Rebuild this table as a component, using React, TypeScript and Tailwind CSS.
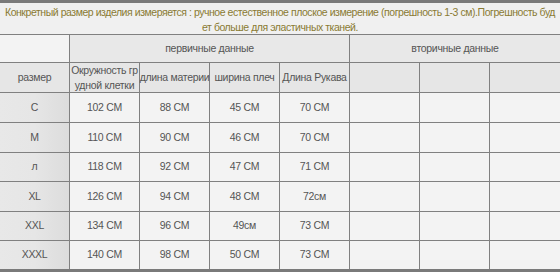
import React from "react";

const rows = [
  ["C", "102 CM", "88 CM", "45 CM", "70 CM", "h-[29px]"],
  ["M", "110 CM", "90 CM", "46 CM", "70 CM", "h-[29px]"],
  ["л", "118 CM", "92 CM", "47 CM", "71 CM", "h-[28px]"],
  ["XL", "126 CM", "94 CM", "48 CM", "72см", "h-[29px]"],
  ["XXL", "134 CM", "96 CM", "49см", "73 CM", "h-[28px]"],
  ["XXXL", "140 CM", "98 CM", "50 CM", "73 CM", "h-[28px]"],
];

export default function App() {
  return (
    <div
      className="w-[560px] h-[272px] overflow-hidden bg-white text-[10.5px] tracking-[-0.3px] text-[#555]"
      style={{ fontFamily: '"Liberation Sans", Arial, sans-serif' }}
    >
      <div className="border-t-[3px] border-b-[3px] border-[#7a7a7a] bg-[#808080] grid grid-cols-[69px_69px_69px_69px_69px_69px_69px_70px] gap-px">
        <div className="col-span-8 h-[31px] bg-[#f0f0f0] px-[3px] pt-[2px] text-center leading-[15px] tracking-[-0.45px] text-[#8a7b33] break-all overflow-hidden">
          Конкретный размер изделия измеряется : ручное естественное плоское измерение (погрешность 1-3 см).Погрешность будет больше для эластичных тканей.
        </div>

        <div className="h-[27px] bg-[#f3f3f3]" />
        <div className="col-span-4 h-[27px] bg-[#e8e8e8] flex items-center justify-center">первичные данные</div>
        <div className="col-span-3 h-[27px] bg-[#e8e8e8] flex items-center justify-center">вторичные данные</div>

        <div className="h-[29px] bg-[#e6e6e6] flex items-center justify-center">размер</div>
        <div className="h-[29px] bg-[#e6e6e6] flex items-center justify-center text-center leading-[15px] break-all">Окружность грудной клетки</div>
        <div className="h-[29px] bg-[#e6e6e6] flex items-center justify-center whitespace-nowrap">длина материи</div>
        <div className="h-[29px] bg-[#e6e6e6] flex items-center justify-center whitespace-nowrap">ширина плеч</div>
        <div className="h-[29px] bg-[#e6e6e6] flex items-center justify-center whitespace-nowrap">Длина Рукава</div>
        <div className="h-[29px] bg-[#e6e6e6]" />
        <div className="h-[29px] bg-[#e6e6e6]" />
        <div className="h-[29px] bg-[#e6e6e6]" />

        {rows.map((r) => (
          <React.Fragment key={r[0]}>
            <div className={`${r[5]} bg-gradient-to-r from-[#e8e8e8] via-[#e6e6e6] to-[#dcdcdc] flex items-center justify-center`}>{r[0]}</div>
            <div className={`${r[5]} bg-[#f3f3f3] flex items-center justify-center`}>{r[1]}</div>
            <div className={`${r[5]} bg-[#f3f3f3] flex items-center justify-center`}>{r[2]}</div>
            <div className={`${r[5]} bg-[#f3f3f3] flex items-center justify-center`}>{r[3]}</div>
            <div className={`${r[5]} bg-[#f3f3f3] flex items-center justify-center`}>{r[4]}</div>
            <div className={`${r[5]} bg-[#f3f3f3]`} />
            <div className={`${r[5]} bg-[#f3f3f3]`} />
            <div className={`${r[5]} bg-[#f3f3f3]`} />
          </React.Fragment>
        ))}
      </div>
    </div>
  );
}
